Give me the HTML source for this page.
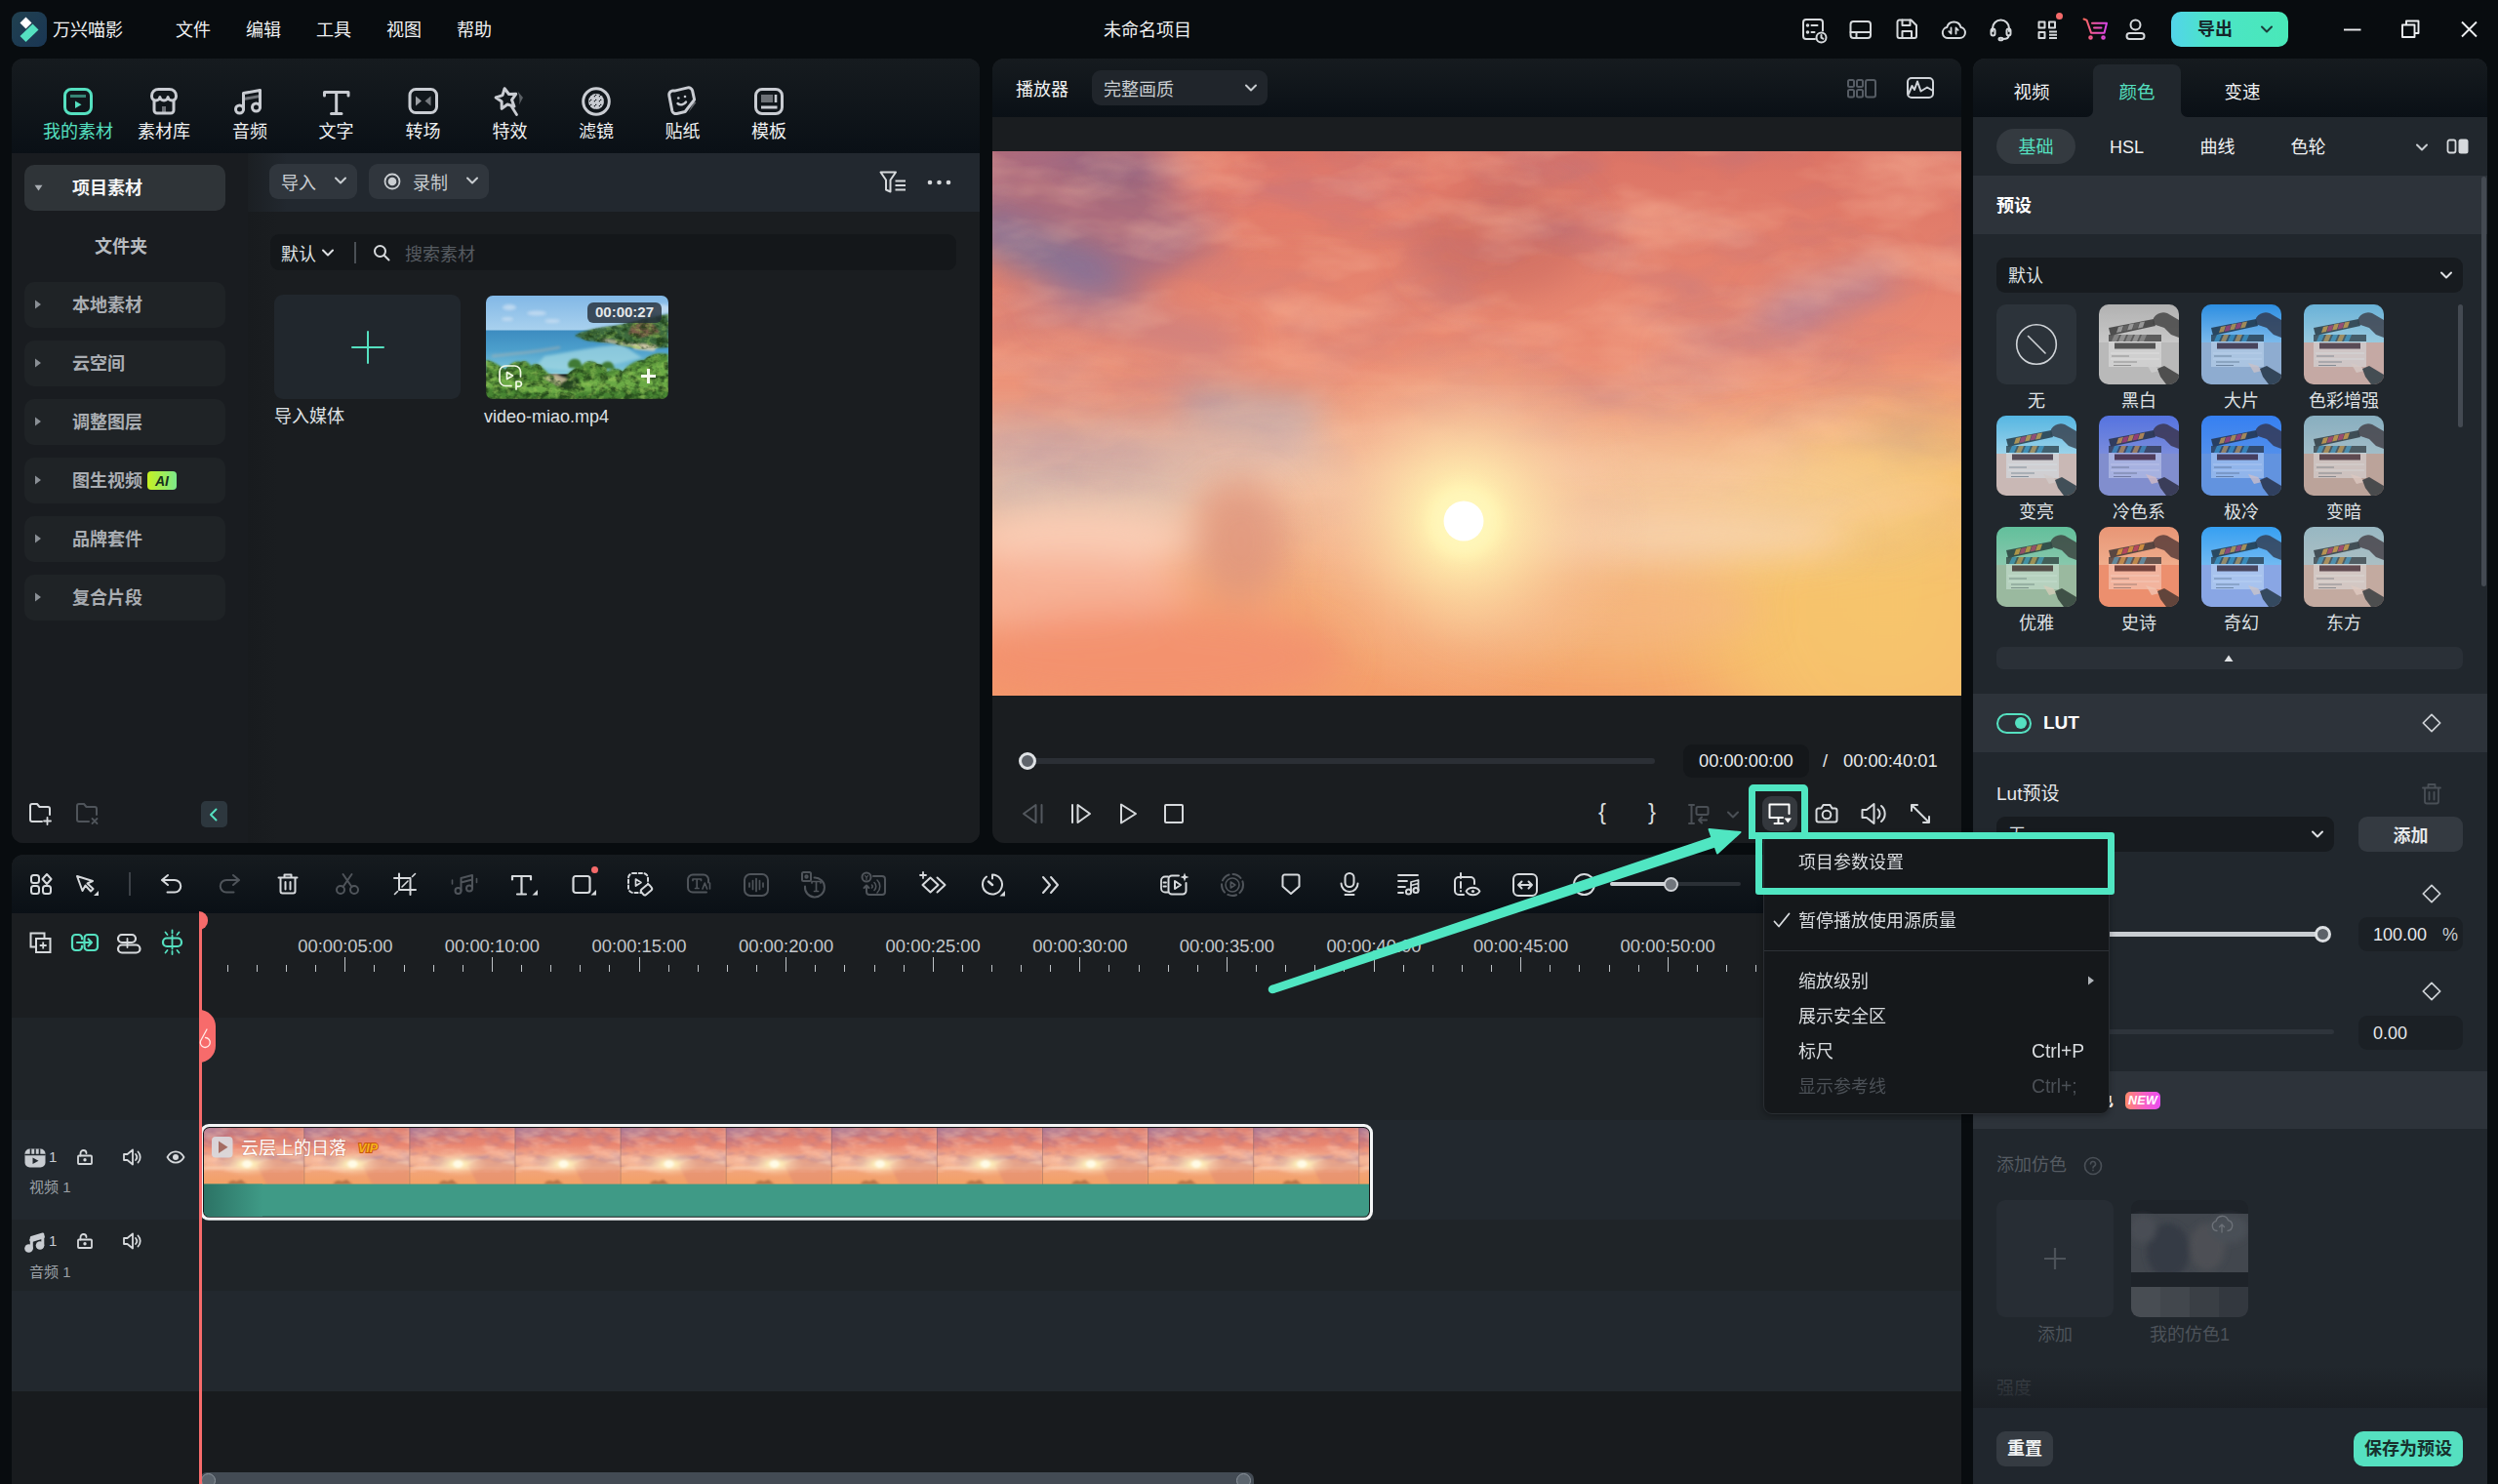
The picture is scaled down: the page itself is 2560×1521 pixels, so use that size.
<!DOCTYPE html>
<html lang="zh-CN">
<head>
<meta charset="utf-8">
<title>万兴喵影</title>
<style>
*{box-sizing:border-box;margin:0;padding:0}
html,body{width:2560px;height:1521px;overflow:hidden;background:#080c0f}
body{position:relative;font-family:"Liberation Sans","Noto Sans CJK SC",sans-serif;font-size:18px;color:#e6e8ea;line-height:1}
.a{position:absolute}
.t{position:absolute;white-space:nowrap;line-height:24px;height:24px}
.c{text-align:center}
.b{font-weight:bold}
svg{position:absolute;overflow:visible}
.ic{fill:none;stroke:#d6d9dc;stroke-width:2;stroke-linecap:round;stroke-linejoin:round}
.dim{stroke:#4f545a}
.teal{stroke:#55e0c0}
/* ---------- panels ---------- */
#left{left:12px;top:60px;width:992px;height:804px;border-radius:12px;background:#1a1d20;overflow:hidden}
#player{left:1017px;top:60px;width:993px;height:804px;border-radius:12px;background:#1a1d20;overflow:hidden}
#right{left:2022px;top:60px;width:527px;height:1480px;border-radius:12px 12px 0 0;background:#21272d;overflow:hidden}
#tl{left:12px;top:876px;width:1998px;height:660px;border-radius:12px 12px 0 0;background:#1b1e21;overflow:hidden}
.hdr{left:0;top:0;width:100%;background:linear-gradient(#161b1f,#0a1016)}
</style>
</head>
<body>

<!-- ================= TITLE BAR ================= -->
<div id="titlebar" class="a" style="left:0;top:0;width:2560px;height:60px">

  <!-- logo -->
  <div class="a" style="left:12px;top:12px;width:36px;height:36px;border-radius:9px;background:linear-gradient(135deg,#20404f,#1a3654)"></div>
  <svg style="left:12px;top:12px" width="36" height="36" viewBox="0 0 36 36"><path d="M14.5 5.5 L20.5 11.5 L14.5 17.5 L8.5 11.5 Z" fill="#ffffff"/><path d="M21.5 12.5 L27.5 18.5 L14.5 31 L8.5 25 Z" fill="#55e0c0"/></svg>
  <div class="t" style="left:54px;top:18.500px;color:#f0f1f2">万兴喵影</div>
  <div class="t" style="left:180px;top:18.500px;color:#f0f1f2">文件</div>
  <div class="t" style="left:252px;top:18.500px;color:#f0f1f2">编辑</div>
  <div class="t" style="left:324px;top:18.500px;color:#f0f1f2">工具</div>
  <div class="t" style="left:396px;top:18.500px;color:#f0f1f2">视图</div>
  <div class="t" style="left:468px;top:18.500px;color:#f0f1f2">帮助</div>
  <div class="t c" style="left:1076px;width:200px;top:18.500px;color:#f0f1f2">未命名项目</div>
  <!-- title icons -->
  <svg class="ic" style="left:1847px;top:19px" width="26" height="26" viewBox="0 0 26 26"><path d="M13 21H4a3 3 0 0 1-3-3V4a3 3 0 0 1 3-3h14a3 3 0 0 1 3 3v8.5"/><path d="M9.5 7h6M9.5 14h3"/><circle cx="5.5" cy="7" r=".8" fill="#d6d9dc"/><circle cx="5.5" cy="14" r=".8" fill="#d6d9dc"/><circle cx="19.5" cy="19.5" r="5"/><path d="M19.5 17v2.7l1.8 1"/></svg>
  <svg class="ic" style="left:1895px;top:20px" width="24" height="22" viewBox="0 0 24 22"><rect x="1.5" y="2" width="20.5" height="17" rx="3"/><path d="M1.5 13h20.5M7.5 13v6"/></svg>
  <svg class="ic" style="left:1943px;top:19px" width="24" height="24" viewBox="0 0 24 24"><path d="M1.5 3.5a2 2 0 0 1 2-2h12l5.5 5.5v11a2 2 0 0 1-2 2h-15.5a2 2 0 0 1-2-2z"/><path d="M6.5 1.5v5.5h8v-5.5M6.5 20v-7h9.5v7"/></svg>
  <svg class="ic" style="left:1989px;top:19px" width="27" height="24" viewBox="0 0 27 24"><path d="M7.5 20a5.5 5.5 0 0 1-1.2-10.9 7.3 7.3 0 0 1 14.2 0A5.5 5.5 0 0 1 19.5 20z"/><path d="M10.5 9.5v6l-2.2-2.4M15.5 15.5v-6l2.2 2.4" stroke-width="1.8"/></svg>
  <svg class="ic" style="left:2039px;top:19px" width="24" height="24" viewBox="0 0 24 24"><path d="M3 13V10a8.500 8.500 0 0 1 17 0v3"/><rect x="1.500" y="10.500" width="4" height="7" rx="2"/><rect x="17.500" y="10.500" width="4" height="7" rx="2"/><path d="M19.500 17.500c0 2.500-2.500 3.500-6 3.500"/><ellipse cx="11.500" cy="21" rx="2" ry="1.300"/></svg>
  <svg class="ic" style="left:2088px;top:21px" width="22" height="20" viewBox="0 0 22 20"><rect x="1.500" y="1.500" width="6" height="6"/><rect x="12" y="1.500" width="6" height="6"/><rect x="1.500" y="12" width="6" height="6"/><path d="M12 11.500h8M12 14.800h8M12 18h8" stroke-linecap="butt"/></svg>
  <div class="a" style="left:2107px;top:13px;width:7px;height:7px;border-radius:4px;background:#f46a6a"></div>
  <svg style="left:2134px;top:18px;fill:none;stroke:url(#cartg);stroke-width:2;stroke-linecap:round;stroke-linejoin:round" width="28" height="24" viewBox="0 0 28 24"><defs><linearGradient id="cartg" gradientUnits="userSpaceOnUse" x1="0" y1="0" x2="28" y2="0"><stop offset="0" stop-color="#f4674d"/><stop offset=".5" stop-color="#f255b2"/><stop offset="1" stop-color="#d03ff0"/></linearGradient></defs><path d="M1.500 1.500l3 1.200 4.500 13h13.500l2.500-10h-15"/><path d="M12 10.500h7.500"/><circle cx="8.500" cy="20.500" r="1.300"/><circle cx="21.500" cy="20.500" r="1.300"/></svg>
  <svg class="ic" style="left:2178px;top:19px" width="22" height="24" viewBox="0 0 22 24"><circle cx="10.500" cy="6.500" r="5"/><rect x="1.500" y="15" width="18" height="6" rx="3"/></svg>
  <!-- export -->
  <div class="a" style="left:2225px;top:12px;width:120px;height:36px;border-radius:10px;background:linear-gradient(90deg,#52d4ea,#4ce4c8 32%,#49e8b8)"></div>
  <div class="t b" style="left:2252px;top:18px;color:#15252a">导出</div>
  <svg style="left:2316px;top:25px;fill:none;stroke:#1c3c3a;stroke-width:2;stroke-linecap:round;stroke-linejoin:round" width="14" height="10" viewBox="0 0 14 10"><path d="M2 2.500l5 5 5-5"/></svg>
  <!-- window controls -->
  <svg class="ic" style="left:2398px;top:18px;stroke:#eceef0;stroke-width:1.900;stroke-linecap:butt" width="150" height="26" viewBox="0 0 150 26"><path d="M4 12.500h17.500"/><path d="M64 7.500h12.500v12.500h-12.500z"/><path d="M68 7.500v-4h12.500v12.500h-4"/><path d="M125 4.500l15 15M140 4.500l-15 15"/></svg>
</div>

<!-- ================= LEFT PANEL ================= -->
<div id="left" class="a"><div class="a pg" style="left:-12px;top:-60px;width:2560px;height:1521px">
  <div class="a" style="left:12px;top:60px;width:992px;height:97px;background:linear-gradient(#161b1f,#0a1016)"></div>
<div class="t c" style="left:20px;width:120px;top:123px;color:#55e0c0">我的素材</div>
<div class="t c" style="left:108px;width:120px;top:123px;color:#f0f1f2">素材库</div>
<div class="t c" style="left:196px;width:120px;top:123px;color:#f0f1f2">音频</div>
<div class="t c" style="left:284.5px;width:120px;top:123px;color:#f0f1f2">文字</div>
<div class="t c" style="left:373.5px;width:120px;top:123px;color:#f0f1f2">转场</div>
<div class="t c" style="left:462.5px;width:120px;top:123px;color:#f0f1f2">特效</div>
<div class="t c" style="left:551px;width:120px;top:123px;color:#f0f1f2">滤镜</div>
<div class="t c" style="left:639.5px;width:120px;top:123px;color:#f0f1f2">贴纸</div>
<div class="t c" style="left:728px;width:120px;top:123px;color:#f0f1f2">模板</div>
<svg style="left:64px;top:89px;fill:none;stroke:#55e0c0;stroke-width:3;stroke-linejoin:round" width="32" height="30" viewBox="0 0 32 30"><rect x="2.500" y="2.500" width="27" height="25" rx="6.500"/><path d="M8 9.500h16" stroke-opacity=".55" stroke-width="3.200"/><path d="M13 14.500l6.500 3.700-6.500 3.700z" fill="#55e0c0" stroke="none"/></svg>
<svg style="left:153px;top:89px;fill:none;stroke:#c9ccd2;stroke-width:3;stroke-linejoin:round;stroke-linecap:round" width="30" height="30" viewBox="0 0 30 30"><path d="M5 14v10a3 3 0 0 0 3 3h14a3 3 0 0 0 3-3V14"/><path d="M2.500 9.500c0-4.500 3-7 7-7h11c4 0 7 2.500 7 7 0 2.500-1.800 4.500-4.200 4.500s-4.200-1.700-4.200-3.500c0 1.800-1.800 3.500-4.100 3.500s-4.100-1.700-4.100-3.500c0 1.800-1.800 3.500-4.200 3.500S2.500 12 2.500 9.500z"/><path d="M15 20v6" stroke-opacity=".5" stroke-width="4" stroke-linecap="butt"/></svg>
<svg style="left:240px;top:90px;fill:none;stroke:#c9ccd2;stroke-width:3;stroke-linejoin:round;stroke-linecap:round" width="30" height="30" viewBox="0 0 30 30"><circle cx="5.500" cy="22" r="4"/><circle cx="22.500" cy="20" r="4"/><path d="M9.500 22V5.500l17-3V20"/><path d="M9.500 11.500l17-3" stroke-opacity=".5" stroke-linecap="butt"/></svg>
<svg style="left:330px;top:92px;fill:none;stroke:#c9ccd2;stroke-width:3;stroke-linejoin:round;stroke-linecap:round" width="30" height="27" viewBox="0 0 30 27"><path d="M2.500 6V2.500h24.500V6M14.700 2.500v22M9.500 24.500h10.500"/></svg>
<svg style="left:418px;top:89px;fill:none;stroke:#c9ccd2;stroke-width:3;stroke-linejoin:round" width="32" height="30" viewBox="0 0 32 30"><rect x="2" y="2.500" width="27.500" height="24" rx="6"/><path d="M8 9.500l6 5-6 5z" fill="#c9ccd2" fill-opacity=".75" stroke="none"/><path d="M23.500 9.500l-6 5 6 5z" fill="#c9ccd2" fill-opacity=".55" stroke="none"/></svg>
<svg style="left:506px;top:88px;fill:none;stroke:#c9ccd2;stroke-width:3;stroke-linejoin:round;stroke-linecap:round" width="34" height="32" viewBox="0 0 34 32"><path d="M11.1 2.7L15.5 8.5L22.7 8.3L18.5 14.3L20.9 21.1L14.0 19.0L8.2 23.4L8.1 16.1L2.1 12.0L9.0 9.6z"/><path d="M18.500 21.500l5 8" stroke-width="2.800"/><path d="M24.500 5.500l5.500 6.500-4 7.500c1-4 .5-9-1.500-14z" fill="#c9ccd2" fill-opacity=".4" stroke="none"/></svg>
<svg style="left:595px;top:88px;fill:none;stroke:#c9ccd2;stroke-width:3" width="32" height="32" viewBox="0 0 32 32"><defs><pattern id="chk" width="5" height="5" patternUnits="userSpaceOnUse"><rect x=".3" y=".3" width="2" height="2" fill="#c9ccd2" fill-opacity=".55"/><rect x="2.800" y="2.800" width="2" height="2" fill="#c9ccd2" fill-opacity=".55"/></pattern></defs><circle cx="16" cy="16" r="8" fill="url(#chk)" stroke="none"/><circle cx="16" cy="16" r="13.300"/></svg>
<svg style="left:683px;top:88px;fill:none;stroke:#c9ccd2;stroke-width:3;stroke-linejoin:round;stroke-linecap:round" width="34" height="32" viewBox="0 0 34 32"><path d="M8.300 5.600l13.500-3.200a4 4 0 0 1 4.800 3l2 9.200-9.500 12.400-8.500 2a4 4 0 0 1-4.800-3L2.800 10.400a4 4 0 0 1 3-4.800z" transform="translate(0,-.5)"/><path d="M28 16l2.500 1-8 10.500z" fill="#c9ccd2" fill-opacity=".45" stroke="none"/><circle cx="12.300" cy="12.500" r="1.300" fill="#c9ccd2" stroke="none"/><circle cx="19" cy="11" r="1.300" fill="#c9ccd2" stroke="none"/><path d="M11.500 18c2.500 2.300 6.500 1.500 8.500-1.500" stroke-width="2.400"/></svg>
<svg style="left:772px;top:89px;fill:none;stroke:#c9ccd2;stroke-width:3;stroke-linejoin:round" width="32" height="30" viewBox="0 0 32 30"><rect x="2.500" y="2.500" width="27" height="25" rx="6.500"/><rect x="8" y="8" width="12" height="8" fill="#c9ccd2" fill-opacity=".5" stroke="none"/><path d="M23 8v8" stroke-width="2.600"/><path d="M8 21h16.500" stroke-width="2.800"/></svg>
<div class="a" style="left:12px;top:157px;width:242px;height:707px;background:#191c20"></div>
<div class="a" style="left:254px;top:157px;width:750px;height:60px;background:linear-gradient(90deg,#1b1f23,#22282f 40px,#22282f)"></div>
<div class="a" style="left:254px;top:217px;width:750px;height:647px;background:linear-gradient(90deg,#181b1e,#1a1d20 30px,#1a1d20)"></div>
<div class="a" style="left:25px;top:169px;width:206px;height:47px;border-radius:10px;background:#2f3438"></div>
<svg style="left:35px;top:189px" width="9" height="7" viewBox="0 0 9 7"><path d="M.5 .8h8L4.500 6.500z" fill="#a9adb2"/></svg>
<div class="t b" style="left:74px;top:181px;color:#f4f5f6">项目素材</div>
<div class="t b" style="left:97px;top:240.500px;color:#b6babf">文件夹</div>
<div class="a" style="left:25px;top:289px;width:206px;height:47px;border-radius:10px;background:#1f2326"></div>
<svg style="left:35px;top:307px" width="8" height="10" viewBox="0 0 8 10"><path d="M1 .5v9L7 5z" fill="#8a8f95"/></svg>
<div class="t b" style="left:74px;top:301px;color:#a9adb2">本地素材</div>
<div class="a" style="left:25px;top:349px;width:206px;height:47px;border-radius:10px;background:#1f2326"></div>
<svg style="left:35px;top:367px" width="8" height="10" viewBox="0 0 8 10"><path d="M1 .5v9L7 5z" fill="#8a8f95"/></svg>
<div class="t b" style="left:74px;top:361px;color:#a9adb2">云空间</div>
<div class="a" style="left:25px;top:409px;width:206px;height:47px;border-radius:10px;background:#1f2326"></div>
<svg style="left:35px;top:427px" width="8" height="10" viewBox="0 0 8 10"><path d="M1 .5v9L7 5z" fill="#8a8f95"/></svg>
<div class="t b" style="left:74px;top:421px;color:#a9adb2">调整图层</div>
<div class="a" style="left:25px;top:469px;width:206px;height:47px;border-radius:10px;background:#1f2326"></div>
<svg style="left:35px;top:487px" width="8" height="10" viewBox="0 0 8 10"><path d="M1 .5v9L7 5z" fill="#8a8f95"/></svg>
<div class="t b" style="left:74px;top:481px;color:#a9adb2">图生视频</div>
<div class="a" style="left:25px;top:529px;width:206px;height:47px;border-radius:10px;background:#1f2326"></div>
<svg style="left:35px;top:547px" width="8" height="10" viewBox="0 0 8 10"><path d="M1 .5v9L7 5z" fill="#8a8f95"/></svg>
<div class="t b" style="left:74px;top:541px;color:#a9adb2">品牌套件</div>
<div class="a" style="left:25px;top:589px;width:206px;height:47px;border-radius:10px;background:#1f2326"></div>
<svg style="left:35px;top:607px" width="8" height="10" viewBox="0 0 8 10"><path d="M1 .5v9L7 5z" fill="#8a8f95"/></svg>
<div class="t b" style="left:74px;top:601px;color:#a9adb2">复合片段</div>
<div class="a" style="left:151px;top:483px;width:30px;height:19px;border-radius:4px;background:linear-gradient(90deg,#c6f222,#7ce98a)"></div>
<div class="t b c" style="left:151px;width:30px;top:481px;font-size:14px;font-style:italic;color:#16301c;font-family:'Liberation Sans',sans-serif">AI</div>
<svg class="ic" style="left:29px;top:822px" width="26" height="24" viewBox="0 0 26 24"><path d="M14 20H4a2 2 0 0 1-2-2V4a2 2 0 0 1 2-2h5l2.500 3H20a2 2 0 0 1 2 2v6"/><path d="M19.500 16v7M16 19.500h7" stroke-width="1.800"/></svg>
<svg class="ic dim" style="left:77px;top:822px" width="26" height="24" viewBox="0 0 26 24"><path d="M14 20H4a2 2 0 0 1-2-2V4a2 2 0 0 1 2-2h5l2.500 3H20a2 2 0 0 1 2 2v6"/><path d="M17.500 17l5 5M22.500 17l-5 5" stroke-width="1.800"/></svg>
<div class="a" style="left:206px;top:821px;width:27px;height:27px;border-radius:5px;background:#2d373e"></div>
<svg class="ic teal" style="left:212px;top:827px" width="14" height="16" viewBox="0 0 14 16"><path d="M9.500 2.500L4 8l5.500 5.500"/></svg>
<div class="a" style="left:276px;top:168px;width:90px;height:36px;border-radius:9px;background:#30363d"></div>
<div class="t" style="left:288px;top:175.500px;color:#c9cdd1">导入</div>
<svg class="ic" style="left:342px;top:180px;stroke:#c9cdd1" width="14" height="10" viewBox="0 0 14 10"><path d="M2 2.500l5 5 5-5"/></svg>
<div class="a" style="left:378px;top:168px;width:123px;height:36px;border-radius:9px;background:#30363d"></div>
<svg style="left:393px;top:177px" width="18" height="18" viewBox="0 0 18 18"><circle cx="9" cy="9" r="7.500" fill="none" stroke="#c9cdd1" stroke-width="1.800"/><circle cx="9" cy="9" r="4.300" fill="#c9cdd1"/></svg>
<div class="t" style="left:423px;top:175.500px;color:#c9cdd1">录制</div>
<svg class="ic" style="left:477px;top:180px;stroke:#c9cdd1" width="14" height="10" viewBox="0 0 14 10"><path d="M2 2.500l5 5 5-5"/></svg>
<svg class="ic" style="left:900px;top:174px" width="30" height="24" viewBox="0 0 30 24"><path d="M2.500 2.500h15.500l-5.500 8v12l-4.500-2v-10z"/><path d="M17.500 11.500h10.500M17.500 16h10.500M17.500 20.500h10.500" stroke-width="1.900" stroke-linecap="butt"/></svg>
<svg style="left:950px;top:183px" width="26" height="8" viewBox="0 0 26 8"><circle cx="3" cy="4" r="2.300" fill="#d6d9dc"/><circle cx="12.500" cy="4" r="2.300" fill="#d6d9dc"/><circle cx="22" cy="4" r="2.300" fill="#d6d9dc"/></svg>
<div class="a" style="left:277px;top:240px;width:703px;height:37px;border-radius:9px;background:#14171a"></div>
<div class="t" style="left:288px;top:248.500px;color:#dfe1e4">默认</div>
<svg class="ic" style="left:329px;top:254px;stroke:#dfe1e4" width="14" height="10" viewBox="0 0 14 10"><path d="M2 2.500l5 5 5-5"/></svg>
<div class="a" style="left:363px;top:248px;width:2px;height:22px;background:#4a4f55"></div>
<svg class="ic" style="left:382px;top:250px" width="18" height="18" viewBox="0 0 18 18"><circle cx="7.500" cy="7.500" r="5.500"/><path d="M12 12l4.500 4.500"/></svg>
<div class="t" style="left:415px;top:248.500px;color:#565b61">搜索素材</div>
<div class="a" style="left:281px;top:302px;width:191px;height:107px;border-radius:9px;background:#21272d"></div>
<svg style="left:359px;top:338px;stroke:#55e0c0;stroke-width:2;stroke-linecap:round" width="36" height="36" viewBox="0 0 36 36"><path d="M18 2v32M2 18h32"/></svg>
<div class="t" style="left:281px;top:415px;color:#dfe1e4">导入媒体</div>
<div class="t" style="left:496px;top:415px;color:#dfe1e4">video-miao.mp4</div>
<svg style="left:498px;top:303px;border-radius:7px;overflow:hidden" width="187" height="106" viewBox="0 0 187 106">
<defs>
<linearGradient id="bsky" x1="0" y1="0" x2="0" y2="1"><stop offset="0" stop-color="#82b8e6"/><stop offset="1" stop-color="#a9d1ee"/></linearGradient>
<linearGradient id="bsea" x1="0" y1="0" x2="0" y2="1"><stop offset="0" stop-color="#3d8cc0"/><stop offset=".45" stop-color="#4c9fcc"/><stop offset="1" stop-color="#86cbdc"/></linearGradient>
<filter id="bb2" x="-20%" y="-20%" width="140%" height="140%"><feGaussianBlur stdDeviation="1.600"/></filter>
<filter id="bb1" x="-20%" y="-20%" width="140%" height="140%"><feGaussianBlur stdDeviation=".8"/></filter><filter id="bturb" x="0" y="0" width="100%" height="100%" color-interpolation-filters="sRGB"><feTurbulence type="fractalNoise" baseFrequency="0.12 0.16" numOctaves="3" seed="3" result="n"/><feColorMatrix in="n" type="matrix" values="0 0 0 0 0.10  0 0 0 0 0.22  0 0 0 0 0.08  3.200 0 0 0 -1.350"/></filter><filter id="bturb2" x="0" y="0" width="100%" height="100%" color-interpolation-filters="sRGB"><feTurbulence type="fractalNoise" baseFrequency="0.14 0.18" numOctaves="3" seed="9" result="n"/><feColorMatrix in="n" type="matrix" values="0 0 0 0 0.62  0 0 0 0 0.80  0 0 0 0 0.36  0 3.200 0 0 -1.500"/></filter><clipPath id="btree"><path d="M0 66c8 1 14 6 20 10 4-6 10-10 16-8 4-2 8 0 10 4 4-3 10-2 12 2l6 6c6 2 12 6 14 10 4-8 10-16 20-18 4-6 12-6 16-2 6 0 10 4 10 8 6-4 12-4 16 0 6-8 14-12 22-12 6-6 14-8 25-6v46H0zM91 41c8-5 22-8 40-10 14-2 30-8 56-12v34l-30 2-28-6-26-3z"/></clipPath>
</defs>
<rect width="187" height="36" fill="url(#bsky)"/>
<g filter="url(#bb2)" fill="#c8def2" opacity=".8"><ellipse cx="24" cy="12" rx="7" ry="3"/><ellipse cx="52" cy="18" rx="10" ry="2.500"/><ellipse cx="68" cy="26" rx="8" ry="2"/><ellipse cx="22" cy="24" rx="6" ry="2"/><ellipse cx="180" cy="14" rx="10" ry="5"/></g>
<rect y="35.500" width="187" height="45" fill="url(#bsea)"/>
<g filter="url(#bb2)">
<path d="M60 62c20-3 50-10 80-12l20 14-60 14-50-4z" fill="#9fd6e2" opacity=".75"/>
<path d="M6 62c30-3 50-5 70-9" stroke="#c9b6a4" stroke-width="2" fill="none" opacity=".55"/>
</g>
<g filter="url(#bb1)">
<path d="M91 41c8-5 22-8 40-10 14-2 30-8 56-12v34l-30 2-28-6-26-3z" fill="#3c6a3c"/>
<path d="M150 30l14-3 8 3 6 8-20 5-12-4z" fill="#8a5a4c" opacity=".8"/>
<path d="M120 44c14 2 30 6 44 6l-2 3c-16-1-30-4-44-6z" fill="#d8c8b8" opacity=".7"/>
<path d="M150 50c10-1 20 0 26 2l-4 5-20-2z" fill="#e6d8b8" opacity=".8"/>
</g>
<g filter="url(#bb1)">
<path d="M0 66c8 1 14 6 20 10 4-6 10-10 16-8 4-2 8 0 10 4 4-3 10-2 12 2l6 6c6 2 12 6 14 10 4-8 10-16 20-18 4-6 12-6 16-2 6 0 10 4 10 8 6-4 12-4 16 0 6-8 14-12 22-12 6-6 14-8 25-6v46H0z" fill="#4f8a34"/>
<path d="M0 78c10 2 18 8 30 10 14 2 24-4 34 2 10 4 22 2 34-4 14-4 26-2 40-8 18-4 34-6 49-12v40H0z" fill="#6aa944"/>
<path d="M70 92c4-8 12-12 20-10 6 2 8 8 4 12-6 4-18 4-24-2z" fill="#1f3a20" opacity=".85"/>
<path d="M84 70c2-6 10-7 13-2l2 6h-14zM118 72c2-5 9-6 12-2l2 5h-13z" fill="#3f7a34"/>
<path d="M58 84l14-4 12 6-10 6z" fill="#d8c8a8" opacity=".8"/>
<path d="M0 96c20-4 40 2 60 4 30 2 60-6 127-2v8H0z" fill="#3f7a30" opacity=".8"/>
</g>
<g clip-path="url(#btree)"><rect width="187" height="106" filter="url(#bturb)" opacity=".75"/><rect width="187" height="106" filter="url(#bturb2)" opacity=".5"/></g>
</svg>
<div class="a" style="left:602px;top:310px;width:76px;height:21px;border-radius:6px;background:rgba(38,48,58,.82)"></div>
<div class="t b c" style="left:602px;width:76px;top:308px;font-size:15px;color:#e4e8ea;font-family:'Liberation Sans',sans-serif">00:00:27</div>
<svg class="ic" style="left:510px;top:373px;stroke:#f4fbe8;stroke-width:1.700" width="28" height="28" viewBox="0 0 28 28"><path d="M14 22.500h-6a6 6 0 0 1-6-6v-8.500a6 6 0 0 1 6-6h9.500a6 6 0 0 1 6 6v5"/><path d="M9.500 8.500l6 3.500-6 3.500z"/><path d="M19 26v-8h2.800a2.600 2.600 0 0 1 0 5.200h-2.800"/></svg>
<svg class="ic" style="left:656px;top:377px;stroke:#f4f8ee;stroke-width:3;stroke-linecap:butt" width="17" height="17" viewBox="0 0 17 17"><path d="M8.500 1v15M1 8.500h15"/></svg>
</div></div>

<!-- ================= PLAYER ================= -->
<div id="player" class="a"><div class="a pg" style="left:-1017px;top:-60px;width:2560px;height:1521px">
  <div class="a" style="left:1017px;top:60px;width:993px;height:60px;background:linear-gradient(#161b1f,#0a1016)"></div>
<div class="t" style="left:1041px;top:80px;color:#f0f1f2">播放器</div>
<div class="a" style="left:1119px;top:72px;width:180px;height:36px;border-radius:9px;background:#20252b"></div>
<div class="t" style="left:1131px;top:80px;color:#c9cdd1">完整画质</div>
<svg class="ic" style="left:1275px;top:85px;stroke:#c9cdd1" width="14" height="10" viewBox="0 0 14 10"><path d="M2 2.500l5 5 5-5"/></svg>
<svg class="ic" style="left:1892px;top:80px;stroke:#565c64" width="32" height="22" viewBox="0 0 32 22"><rect x="2" y="2" width="6" height="7" rx="1.500"/><rect x="11" y="2" width="6" height="7" rx="1.500"/><rect x="2" y="12" width="6" height="7.500" rx="1.500"/><rect x="11" y="12" width="6" height="7.500" rx="1.500"/><rect x="20" y="2" width="10" height="17.500" rx="2"/></svg>
<svg class="ic" style="left:1953px;top:78px;stroke:#cfd3d8" width="30" height="24" viewBox="0 0 30 24"><rect x="2" y="2" width="26" height="20" rx="4"/><path d="M3 18l3.500-8 2.500 4 3-8.500 3.500 10 6.500-4 5 3"/></svg>
<svg style="left:1017px;top:155px" width="993" height="558" viewBox="0 0 993 558">
<defs>
<linearGradient id="vbg" x1="0" y1="0" x2="0" y2="1"><stop offset="0" stop-color="#dc7466"/><stop offset=".35" stop-color="#ea8a72"/><stop offset=".6" stop-color="#f2a888"/><stop offset=".78" stop-color="#f4a67a"/><stop offset="1" stop-color="#f49a6a"/></linearGradient>
<radialGradient id="vsun" cx="0.5" cy="0.5" r="0.5"><stop offset="0" stop-color="#fffbd8" stop-opacity="1"/><stop offset=".18" stop-color="#fff2b0" stop-opacity=".95"/><stop offset=".4" stop-color="#fde0a8" stop-opacity=".7"/><stop offset=".7" stop-color="#f9c9a0" stop-opacity=".3"/><stop offset="1" stop-color="#f8c090" stop-opacity="0"/></radialGradient>
<linearGradient id="vyel" x1="0" y1="0" x2="1" y2="0"><stop offset="0" stop-color="#f6c56e" stop-opacity="0"/><stop offset=".45" stop-color="#f6c56e" stop-opacity=".15"/><stop offset="1" stop-color="#f7c76c" stop-opacity="1"/></linearGradient>
<filter id="vb40" x="-50%" y="-50%" width="200%" height="200%"><feGaussianBlur stdDeviation="40"/></filter>
<filter id="vb20" x="-50%" y="-50%" width="200%" height="200%"><feGaussianBlur stdDeviation="18"/></filter>
<filter id="vb8" x="-50%" y="-50%" width="200%" height="200%"><feGaussianBlur stdDeviation="8"/></filter>
<filter id="vturb" x="0" y="0" width="100%" height="100%" color-interpolation-filters="sRGB"><feTurbulence type="fractalNoise" baseFrequency="0.006 0.014" numOctaves="4" seed="7" result="n"/><feColorMatrix in="n" type="matrix" values="0 0 0 0 0.55  0 0 0 0 0.42  0 0 0 0 0.62  2.600 0 0 0 -1.150"/></filter>
<filter id="vturb2" x="0" y="0" width="100%" height="100%" color-interpolation-filters="sRGB"><feTurbulence type="fractalNoise" baseFrequency="0.008 0.02" numOctaves="4" seed="23" result="n"/><feColorMatrix in="n" type="matrix" values="0 0 0 0 1  0 0 0 0 0.78  0 0 0 0 0.66  0 2.400 0 0 -1.050"/></filter>
<linearGradient id="vfade" x1="0" y1="0" x2="0" y2="1"><stop offset="0" stop-color="#fff" stop-opacity="1"/><stop offset=".55" stop-color="#fff" stop-opacity=".7"/><stop offset=".8" stop-color="#fff" stop-opacity="0"/></linearGradient>
<mask id="vmask"><rect width="993" height="558" fill="url(#vfade)"/></mask>
<clipPath id="vclip"><rect width="993" height="558"/></clipPath>
</defs>
<g clip-path="url(#vclip)">
<rect width="993" height="558" fill="url(#vbg)"/>
<!-- yellow lower right -->
<rect x="0" y="300" width="993" height="258" fill="url(#vyel)" filter="url(#vb40)"/>
<ellipse cx="960" cy="470" rx="220" ry="200" fill="#f7c56c" filter="url(#vb40)" opacity=".8"/>
<!-- blue/purple upper-left streaks -->
<g filter="url(#vb20)">
<path d="M-30 -20 L170 -20 L230 90 L130 160 L-30 95 Z" fill="#9a6884" opacity=".72"/><path d="M-20 55 L110 105 L140 135 L100 150 L-20 100 Z" fill="#74749c" opacity=".8"/>
<path d="M60 -10 L160 10 L190 55 L90 30 Z" fill="#86607e" opacity=".6"/>
<path d="M60 140 L260 190 L240 215 L50 170 Z" fill="#b07890" opacity=".6"/>
<path d="M-20 270 L330 285 L360 335 L-20 350 Z" fill="#c4b8bc" opacity=".55"/>
<path d="M200 240 L340 258 L335 285 L190 270 Z" fill="#93a8c4" opacity=".65"/>
<path d="M-20 335 L220 345 L190 390 L-20 390 Z" fill="#cfcac2" opacity=".6"/>
<path d="M790 150 L920 110 L930 140 L800 185 Z" fill="#a880a0" opacity=".7"/>
<path d="M690 200 L840 170 L850 200 L700 225 Z" fill="#c88890" opacity=".5"/>
<ellipse cx="520" cy="90" rx="90" ry="60" fill="#cf6e62" opacity=".7"/>
<ellipse cx="330" cy="40" rx="160" ry="30" fill="#e97f6c" opacity=".6"/>
</g>
<g mask="url(#vmask)"><rect width="993" height="558" filter="url(#vturb)" opacity=".24"/><rect width="993" height="558" filter="url(#vturb2)" opacity=".38"/></g>
<!-- horizon pale band -->
<ellipse cx="560" cy="350" rx="420" ry="55" fill="#f7d8bc" opacity=".55" filter="url(#vb40)"/>
<!-- clouds low -->
<g filter="url(#vb20)">
<ellipse cx="90" cy="395" rx="120" ry="32" fill="#fad0b8" opacity=".95"/>
<ellipse cx="70" cy="450" rx="130" ry="40" fill="#f7b49c" opacity=".8"/>
<ellipse cx="255" cy="400" rx="48" ry="62" fill="#dc917c" opacity=".7"/>
<ellipse cx="160" cy="520" rx="200" ry="50" fill="#f38e6e" opacity=".8"/>
<ellipse cx="700" cy="395" rx="180" ry="22" fill="#fad9b8" opacity=".7"/>
<ellipse cx="620" cy="470" rx="170" ry="40" fill="#f5b886" opacity=".6"/>
</g>
<!-- sun -->
<circle cx="483" cy="379" r="190" fill="url(#vsun)"/>
<circle cx="483" cy="379" r="34" fill="#fff6b8" filter="url(#vb8)"/>
<circle cx="483" cy="379" r="20.500" fill="#ffffff"/>
</g>
</svg>
<div class="a" style="left:1052px;top:777px;width:644px;height:6px;border-radius:3px;background:#2b2f35"></div>
<div class="a" style="left:1044px;top:771px;width:18px;height:18px;border-radius:9px;background:#5e636a;border:3.200px solid #dfe2e5"></div>
<div class="a" style="left:1725px;top:763px;width:129px;height:34px;border-radius:9px;background:#14171a"></div>
<div class="t" style="left:1741px;top:768px;color:#e8eaec;font-size:18.300px">00:00:00:00</div>
<div class="t" style="left:1868px;top:768px;color:#e8eaec">/</div>
<div class="t" style="left:1889px;top:768px;color:#e8eaec;font-size:18.300px">00:00:40:01</div>
<svg class="ic" style="left:1046px;top:822px;stroke:#53585e" width="26" height="24" viewBox="0 0 26 24"><path d="M15.500 3v18l-12.500-9z"/><path d="M21.500 3v18"/></svg>
<svg class="ic" style="left:1096px;top:822px" width="26" height="24" viewBox="0 0 26 24"><path d="M3 3v18"/><path d="M8.500 3v18l12.500-9z"/></svg>
<svg class="ic" style="left:1145px;top:822px" width="24" height="24" viewBox="0 0 24 24"><path d="M4 2.500v19l15-9.500z"/></svg>
<svg class="ic" style="left:1192px;top:823px" width="22" height="22" viewBox="0 0 22 22"><rect x="2" y="2" width="18" height="18" rx="1"/></svg>
<div class="t" style="left:1638px;top:820px;font-size:24px;color:#d6d9dc;font-family:'Liberation Sans',sans-serif">{</div>
<div class="t" style="left:1689px;top:820px;font-size:24px;color:#d6d9dc;font-family:'Liberation Sans',sans-serif">}</div>
<svg class="ic" style="left:1729px;top:823px;stroke:#4a4f55" width="26" height="24" viewBox="0 0 26 24"><path d="M2 2h5M2 21h5M4.500 2v19"/><rect x="9.500" y="4" width="12" height="8" rx="1.500"/><path d="M20 17.500h-8m3-3l-3 3 3 3"/></svg>
<svg class="ic" style="left:1769px;top:830px;stroke:#4a4f55" width="14" height="10" viewBox="0 0 14 10"><path d="M2 2.500l5 5 5-5"/></svg>
<div class="a" style="left:1806px;top:816px;width:36px;height:36px;border-radius:9px;background:#34383d"></div>
<svg class="ic" style="left:1810px;top:821px;stroke:#ffffff" width="28" height="26" viewBox="0 0 28 26"><path d="M17 17H3.500V3.500h20V13"/><path d="M12.500 17v5.500M8.500 23h8.500"/><path d="M18.500 17.500h7.500l-3.750 5z" fill="#fff" stroke="none"/></svg>
<svg class="ic" style="left:1859px;top:822px" width="26" height="24" viewBox="0 0 26 24"><path d="M2.500 8.500a2 2 0 0 1 2-2h3l2-3.500h7l2 3.500h3a2 2 0 0 1 2 2v10a2 2 0 0 1-2 2h-17a2 2 0 0 1-2-2z"/><circle cx="13" cy="13" r="4.300"/></svg>
<svg class="ic" style="left:1906px;top:821px" width="30" height="26" viewBox="0 0 30 26"><path d="M2.500 9v8h4.500l7.500 6V3L7 9z"/><path d="M18.500 8.500a6 6 0 0 1 0 9M22 5a10.500 10.500 0 0 1 0 16"/></svg>
<svg class="ic" style="left:1956px;top:822px" width="24" height="24" viewBox="0 0 24 24"><path d="M3 3l18 18M3 9V3h6M21 15v6h-6"/></svg>
</div></div>

<!-- ================= TIMELINE ================= -->
<div id="tl" class="a"><div class="a pg" style="left:-12px;top:-876px;width:2560px;height:1521px">
  <div class="a" style="left:12px;top:876px;width:1998px;height:60px;background:linear-gradient(#161b1f,#0a1016)"></div>
<svg class="ic" style="left:30px;top:894px;" width="24" height="24" viewBox="0 0 24 24"><rect x="2" y="3" width="8" height="8" rx="2.500"/><rect x="2" y="14" width="8" height="8" rx="2.500"/><rect x="14" y="14" width="8" height="8" rx="2.500"/><path d="M18 2l4.500 5-4.500 5-4.500-5z"/></svg>
<svg class="ic" style="left:76px;top:895px;" width="28" height="24" viewBox="0 0 28 24"><path d="M3 3l5.500 15 3-5.500 5.500 6 2.500-2.500-6-5.500 5.500-2.500z"/><path d="M25 18v5h-5z" fill="#d6d9dc" stroke="none"/></svg>
<div class="a" style="left:132px;top:894px;width:2px;height:24px;background:#3c4147"></div>
<svg class="ic" style="left:163px;top:894px;" width="26" height="24" viewBox="0 0 26 24"><path d="M9 3l-6 5 6 5"/><path d="M3.500 8h12.500a6 6 0 0 1 0 12.500h-7.500"/></svg>
<svg class="ic dim" style="left:222px;top:894px;" width="26" height="24" viewBox="0 0 26 24"><path d="M17 3l6 5-6 5"/><path d="M22.500 8h-12.500a6 6 0 0 0 0 12.500h7.500"/></svg>
<svg class="ic" style="left:283px;top:894px;" width="24" height="24" viewBox="0 0 24 24"><path d="M2.500 5.500h19M8.500 5v-2.500h7v2.500M4.500 5.500v14a2 2 0 0 0 2 2h11a2 2 0 0 0 2-2v-14M9.500 10v7.500M14.500 10v7.500"/></svg>
<svg class="ic dim" style="left:343px;top:894px;" width="26" height="24" viewBox="0 0 26 24"><circle cx="6" cy="18" r="4"/><circle cx="20" cy="18" r="4"/><path d="M8.500 15l9-13M17.500 15l-9-13"/></svg>
<svg class="ic" style="left:403px;top:894px;" width="24" height="24" viewBox="0 0 24 24"><path d="M6 1.500v16.500h17M1 6h16.500v17"/><path d="M1.500 22.500l3-3M19.500 4.500l3-3M9 15l6-6" stroke-width="1.600"/></svg>
<svg class="ic dim" style="left:461px;top:894px;" width="30" height="24" viewBox="0 0 30 24"><circle cx="8.500" cy="19" r="3"/><circle cx="20" cy="16.500" r="3"/><path d="M11.500 19v-13l11.500-3v13.500M11.500 10.500l11.500-3"/><path d="M2.500 8v4M27.500 6.500v4" stroke-width="1.600"/></svg>
<svg class="ic" style="left:522px;top:895px;stroke-width:2.200" width="30" height="24" viewBox="0 0 30 24"><path d="M3 6.500v-3.500h19v3.500M12.500 3v18M8 21.500h9"/><path d="M29 17v5.500h-5.500z" fill="#d6d9dc" stroke="none"/></svg>
<svg class="ic" style="left:585px;top:895px;stroke-width:2.200" width="28" height="24" viewBox="0 0 28 24"><rect x="2.500" y="3" width="17" height="17" rx="2.500"/><path d="M26 17v5.500h-5.500z" fill="#d6d9dc" stroke="none"/></svg>
<div class="a" style="left:605.500px;top:887.500px;width:7px;height:7px;border-radius:4px;background:#f46a6a"></div>
<svg class="ic" style="left:642px;top:893px;" width="30" height="26" viewBox="0 0 30 26"><rect x="2" y="2" width="20" height="20" rx="5" stroke-dasharray="3.200 2.600"/><path d="M9.500 8l5.500 3.500-5.500 3.500z" stroke-width="1.700"/><rect x="15" y="15.500" width="11" height="7" rx="2" transform="rotate(-40 20.500 19)" fill="#12161b"/></svg>
<svg class="ic dim" style="left:702px;top:894px;" width="30" height="26" viewBox="0 0 30 26"><path d="M22 20.500h-14a5 5 0 0 1-5-5v-8a5 5 0 0 1 5-5h11a5 5 0 0 1 5 5v3"/><path d="M8 8.500v-1.500h8.500v1.500M12.200 7v9.500M10.500 16.500h3.500" stroke-width="1.700"/><path d="M18 17l2.300-6 2.300 6M25.500 11v6" stroke-width="1.600"/></svg>
<svg class="ic dim" style="left:761px;top:894px;" width="28" height="26" viewBox="0 0 28 26"><rect x="2" y="2" width="24" height="22" rx="6"/><path d="M7 11v4M10.500 8.500v9M14 6.500v13M17.500 8.500v9M21 11v4" stroke-width="1.700"/></svg>
<svg class="ic dim" style="left:820px;top:892px;" width="30" height="28" viewBox="0 0 30 28"><rect x="2" y="2" width="9" height="9" rx="1.500"/><circle cx="6.500" cy="6.500" r="1.200"/><path d="M14.500 7.500a10 10 0 1 1-9.500 9"/><path d="M12 13v-1.500h9v1.500M16.500 11.500v10M14.500 21.500h4" stroke-width="1.700"/></svg>
<svg class="ic dim" style="left:881px;top:892px;" width="30" height="28" viewBox="0 0 30 28"><circle cx="7" cy="7" r="4.500"/><path d="M5.500 5.500l1.500 2 1.500-2M7 7.500v2" stroke-width="1.200"/><path d="M14 6h9a3 3 0 0 1 3 3v13a3 3 0 0 1-3 3h-13a3 3 0 0 1-3-3v-6M4.500 18l2.500-2.500 2.500 2.500"/><path d="M12.500 15a2 2 0 0 1 0 3M15 12.500a5.500 5.500 0 0 1 0 8M18 10a9 9 0 0 1 0 13" stroke-width="1.600"/></svg>
<svg class="ic" style="left:940px;top:892px;" width="32" height="28" viewBox="0 0 32 28"><path d="M3 5h6M6 2v6" stroke-width="1.800"/><path d="M13.500 7.500l8 7.500-8 7.500-8-7.500z"/><path d="M20.500 7.500l8 7.500-8 7.500"/></svg>
<svg class="ic" style="left:1003px;top:893px;" width="28" height="28" viewBox="0 0 28 28"><path d="M8 5.500a10 10 0 1 0 6-2v4"/><path d="M10 10.500l4 3.500" stroke-width="2.400"/><path d="M27 20v5.500h-5.500z" fill="#d6d9dc" stroke="none"/></svg>
<svg class="ic" style="left:1066px;top:896px;" width="20" height="22" viewBox="0 0 20 22"><path d="M3 3l7 8-7 8M11 3l7 8-7 8"/></svg>
<svg class="ic" style="left:1188px;top:893px;" width="32" height="26" viewBox="0 0 32 26"><path d="M9 5.500h-3a4 4 0 0 0-4 4v8a4 4 0 0 0 4 4h3M4.500 11.500h2.500M4.500 15.500h2.500" stroke-width="1.800"/><path d="M20 4.500h-7a3.500 3.500 0 0 0-3.500 3.500v12a3.500 3.500 0 0 0 3.500 3.500h11a3.500 3.500 0 0 0 3.500-3.500v-8"/><path d="M16 10l6 4-6 4z"/><path d="M26 1.500l1.200 3.300 3.300 1.200-3.300 1.200-1.200 3.300-1.200-3.300-3.300-1.200 3.300-1.200z" fill="#d6d9dc" stroke="none"/></svg>
<svg class="ic dim" style="left:1250px;top:894px;" width="26" height="26" viewBox="0 0 26 26"><circle cx="13" cy="13" r="11" stroke-dasharray="9 4"/><circle cx="13" cy="13" r="7" stroke-width="1.600"/><path d="M11.300 10l4.500 3-4.500 3z" stroke-width="1.600"/></svg>
<svg class="ic" style="left:1312px;top:894px;" width="22" height="24" viewBox="0 0 22 24"><path d="M2.500 4.500a2 2 0 0 1 2-2h13a2 2 0 0 1 2 2v10l-8.500 7.500-8.500-7.500z"/></svg>
<svg class="ic" style="left:1372px;top:893px;" width="22" height="26" viewBox="0 0 22 26"><rect x="6.500" y="2" width="9" height="14" rx="4.500"/><path d="M2.500 12.500a8.500 8.500 0 0 0 17 0M6.500 24h9"/></svg>
<svg class="ic" style="left:1431px;top:894px;" width="24" height="26" viewBox="0 0 24 26"><path d="M2 3h20M2 9h9M2 15h7M2 21h5" stroke-width="1.800"/><circle cx="12.500" cy="20" r="2.600"/><circle cx="20" cy="18.500" r="2.600"/><path d="M15 20v-10l7.500-2v10.500M15 13.500l7.500-2" stroke-width="1.800"/></svg>
<svg class="ic" style="left:1489px;top:893px;" width="30" height="28" viewBox="0 0 30 28"><path d="M8 2v5M22 13v-3a4 4 0 0 0-4-4h-12a4 4 0 0 0-4 4v10a4 4 0 0 0 4 4h5"/><path d="M8 11v6M8 20v.5"/><path d="M13.500 20.500c3-5 11-5 14 0-3 5-11 5-14 0z" stroke-width="1.800"/><circle cx="20.500" cy="20.500" r="1.600" fill="#d6d9dc" stroke="none"/></svg>
<svg class="ic" style="left:1549px;top:894px;" width="28" height="26" viewBox="0 0 28 26"><rect x="2" y="2" width="24" height="22" rx="5"/><path d="M7 13h14M10.500 9.500l-3.500 3.500 3.500 3.500M17.500 9.500l3.500 3.500-3.500 3.500"/></svg>
<svg class="ic" style="left:1611px;top:894px;" width="26" height="26" viewBox="0 0 26 26"><circle cx="12.500" cy="12.500" r="10.500"/><path d="M7.500 12.500h10"/></svg>
<div class="a" style="left:1650px;top:904px;width:134px;height:4px;border-radius:2px;background:#2b3036"></div>
<div class="a" style="left:1650px;top:904px;width:62px;height:4px;border-radius:2px;background:#cfd2d6"></div>
<div class="a" style="left:1705px;top:898.500px;width:15px;height:15px;border-radius:8px;background:#70757c;border:2px solid #d0d3d7"></div>
<svg class="ic" style="left:29px;top:954px;stroke-linejoin:miter;stroke-linecap:butt" width="26" height="24" viewBox="0 0 26 24"><path d="M8 16.500h-5.500v-14h14v5"/><rect x="8" y="8" width="14.500" height="14"/><path d="M15.200 11.500v7M11.700 15h7" stroke-width="1.800"/></svg>
<svg class="ic teal" style="left:72px;top:956px;stroke-width:2.200" width="30" height="20" viewBox="0 0 30 20"><path d="M12 6.500v-1a3.500 3.500 0 0 0-3.500-3.500h-3a3.500 3.500 0 0 0-3.500 3.500v9a3.500 3.500 0 0 0 3.500 3.500h3a3.500 3.500 0 0 0 3.500-3.500v-1"/><rect x="14.500" y="2" width="13.500" height="16" rx="3.500"/><path d="M7 10h15M18.500 6.500l3.500 3.500-3.500 3.500"/></svg>
<svg class="ic" style="left:119px;top:956px;stroke-width:2.200" width="26" height="22" viewBox="0 0 26 22"><rect x="2" y="2" width="18" height="8" rx="4"/><rect x="2" y="12.500" width="22.500" height="8" rx="4"/><path d="M11.500 6v9" stroke-width="1.800"/></svg>
<svg class="ic teal" style="left:164px;top:952px;stroke-width:2.200" width="26" height="28" viewBox="0 0 26 28"><rect x="3" y="9.500" width="19" height="8.500" rx="4"/><path d="M12.500 7v13.500M12.500 1.500v3M5.500 3.500l2 2.500M19.500 3.500l-2 2.500M12.500 23v3M5.500 24.500l2-2.500M19.500 24.500l-2-2.500" stroke-width="1.800"/></svg>
<svg style="left:0;top:0;stroke:#bfc3c7;stroke-width:1;fill:none;shape-rendering:crispEdges" width="2560" height="1521" viewBox="0 0 2560 1521"><path d="M233.3 989V996 M263.4 989V996 M293.6 989V996 M323.7 989V996 M353.8 981V996 M383.9 989V996 M414.0 989V996 M444.2 989V996 M474.3 989V996 M504.4 981V996 M534.5 989V996 M564.6 989V996 M594.8 989V996 M624.9 989V996 M655.0 981V996 M685.1 989V996 M715.2 989V996 M745.4 989V996 M775.5 989V996 M805.6 981V996 M835.7 989V996 M865.8 989V996 M896.0 989V996 M926.1 989V996 M956.2 981V996 M986.3 989V996 M1016.4 989V996 M1046.6 989V996 M1076.7 989V996 M1106.8 981V996 M1136.9 989V996 M1167.0 989V996 M1197.2 989V996 M1227.3 989V996 M1257.4 981V996 M1287.5 989V996 M1317.6 989V996 M1347.8 989V996 M1377.9 989V996 M1408.0 981V996 M1438.1 989V996 M1468.2 989V996 M1498.4 989V996 M1528.5 989V996 M1558.6 981V996 M1588.7 989V996 M1618.8 989V996 M1649.0 989V996 M1679.1 989V996 M1709.2 981V996 M1739.3 989V996 M1769.4 989V996 M1799.6 989V996 M1829.7 989V996 M1859.8 981V996 M1889.9 989V996 M1920.0 989V996"/></svg>
<div class="t c" style="left:283.8px;width:140px;top:958px;color:#c3c7cb;font-size:18.400px">00:00:05:00</div>
<div class="t c" style="left:434.4px;width:140px;top:958px;color:#c3c7cb;font-size:18.400px">00:00:10:00</div>
<div class="t c" style="left:585.0px;width:140px;top:958px;color:#c3c7cb;font-size:18.400px">00:00:15:00</div>
<div class="t c" style="left:735.6px;width:140px;top:958px;color:#c3c7cb;font-size:18.400px">00:00:20:00</div>
<div class="t c" style="left:886.2px;width:140px;top:958px;color:#c3c7cb;font-size:18.400px">00:00:25:00</div>
<div class="t c" style="left:1036.8px;width:140px;top:958px;color:#c3c7cb;font-size:18.400px">00:00:30:00</div>
<div class="t c" style="left:1187.4px;width:140px;top:958px;color:#c3c7cb;font-size:18.400px">00:00:35:00</div>
<div class="t c" style="left:1338.0px;width:140px;top:958px;color:#c3c7cb;font-size:18.400px">00:00:40:00</div>
<div class="t c" style="left:1488.6px;width:140px;top:958px;color:#c3c7cb;font-size:18.400px">00:00:45:00</div>
<div class="t c" style="left:1639.2px;width:140px;top:958px;color:#c3c7cb;font-size:18.400px">00:00:50:00</div>
<div class="a" style="left:12px;top:1043px;width:1998px;height:105px;background:#1f2428"></div>
<div class="a" style="left:12px;top:1148px;width:1998px;height:102px;background:#22282e"></div>
<div class="a" style="left:12px;top:1250px;width:1998px;height:73px;background:#1f2428"></div>
<div class="a" style="left:12px;top:1323px;width:1998px;height:103px;background:#22282e"></div>
<div class="a" style="left:12px;top:1426px;width:1998px;height:100px;background:#181b1e"></div>
<svg class="ic" style="left:25px;top:1177px;" width="22" height="20" viewBox="0 0 22 20"><rect x=".5" y=".5" width="21" height="19" rx="5" fill="#c8ccd1" stroke="none"/><path d="M1 6.500h20M6.500 1v5M11 1v5M15.500 1v5" stroke="#22282e" stroke-width="1.600"/><path d="M8.500 9.500l6 3.300-6 3.300z" fill="#22282e" stroke="none"/></svg>
<div class="t" style="left:50px;top:1174px;font-size:15px;color:#c8ccd1">1</div>
<svg class="ic" style="left:78px;top:1177px;stroke-width:1.800" width="18" height="18" viewBox="0 0 18 18"><rect x="2" y="7.500" width="14" height="8.500" rx="1"/><path d="M4.500 7.500v-2.500a3 3 0 0 1 6 0"/><circle cx="9" cy="11.700" r=".8" fill="#d6d9dc"/></svg>
<svg class="ic" style="left:125px;top:1176px;stroke-width:1.800" width="22" height="20" viewBox="0 0 22 20"><path d="M2 7v6h3.500l5.500 4.500v-15l-5.500 4.500z"/><path d="M14 7a4.500 4.500 0 0 1 0 6M16.500 4.500a8 8 0 0 1 0 11"/></svg>
<svg class="ic" style="left:170px;top:1178px;stroke-width:1.800" width="20" height="16" viewBox="0 0 20 16"><path d="M1.500 8c4-7.500 13-7.500 17 0-4 7.500-13 7.500-17 0z"/><circle cx="10" cy="8" r="3" fill="#d6d9dc" stroke="none"/></svg>
<svg class="ic" style="left:24px;top:1263px;" width="24" height="22" viewBox="0 0 24 22"><circle cx="5.500" cy="16.500" r="4.300" fill="#c8ccd1" stroke="none"/><circle cx="17" cy="13.500" r="4.300" fill="#c8ccd1" stroke="none"/><path d="M8.300 16.500v-11l11.500-3.500v11.500" stroke="#c8ccd1" stroke-width="3"/><path d="M8.300 8l11.500-3.500" stroke="#c8ccd1" stroke-width="4"/></svg>
<div class="t" style="left:50px;top:1260px;font-size:15px;color:#c8ccd1">1</div>
<svg class="ic" style="left:78px;top:1263px;stroke-width:1.800" width="18" height="18" viewBox="0 0 18 18"><rect x="2" y="7.500" width="14" height="8.500" rx="1"/><path d="M4.500 7.500v-2.500a3 3 0 0 1 6 0"/><circle cx="9" cy="11.700" r=".8" fill="#d6d9dc"/></svg>
<svg class="ic" style="left:125px;top:1262px;stroke-width:1.800" width="22" height="20" viewBox="0 0 22 20"><path d="M2 7v6h3.500l5.500 4.500v-15l-5.500 4.500z"/><path d="M14 7a4.500 4.500 0 0 1 0 6M16.500 4.500a8 8 0 0 1 0 11"/></svg>
<div class="t" style="left:30px;top:1205px;font-size:15px;color:#9ca1a7">视频 1</div>
<div class="t" style="left:30px;top:1292px;font-size:15px;color:#9ca1a7">音频 1</div>
<svg style="left:0;top:0" width="2560" height="1521" viewBox="0 0 2560 1521">
<defs>
<linearGradient id="tg" x1="0" y1="0" x2="0" y2="1"><stop offset="0" stop-color="#d9776c"/><stop offset=".3" stop-color="#ea8670"/><stop offset=".55" stop-color="#f3b294"/><stop offset=".75" stop-color="#f2a47a"/><stop offset="1" stop-color="#f3a064"/></linearGradient>
<radialGradient id="tsun"><stop offset="0" stop-color="#fffbe0"/><stop offset=".25" stop-color="#fff0b8" stop-opacity=".9"/><stop offset=".6" stop-color="#fbd8b0" stop-opacity=".45"/><stop offset="1" stop-color="#f8c8a0" stop-opacity="0"/></radialGradient>
<linearGradient id="tpur" x1="0" y1="0" x2="1" y2="1"><stop offset="0" stop-color="#9a6a98" stop-opacity=".75"/><stop offset=".5" stop-color="#b06c88" stop-opacity="0"/></linearGradient>
<filter id="tturb" x="0" y="0" width="100%" height="100%" color-interpolation-filters="sRGB"><feTurbulence type="fractalNoise" baseFrequency="0.035 0.07" numOctaves="3" seed="5" result="n"/><feColorMatrix in="n" type="matrix" values="0 0 0 0 0.60  0 0 0 0 0.45  0 0 0 0 0.60  2.800 0 0 0 -1.200"/></filter>
<filter id="tturb2" x="0" y="0" width="100%" height="100%" color-interpolation-filters="sRGB"><feTurbulence type="fractalNoise" baseFrequency="0.04 0.09" numOctaves="3" seed="11" result="n"/><feColorMatrix in="n" type="matrix" values="0 0 0 0 1  0 0 0 0 0.80  0 0 0 0 0.70  0 2.600 0 0 -1.100"/></filter>
<filter id="tb1"><feGaussianBlur stdDeviation="1.200"/></filter>
<pattern id="tpat" x="203.200" y="1156" width="108.100" height="58" patternUnits="userSpaceOnUse">
<rect width="108.100" height="58" fill="url(#tg)"/>
<rect width="60" height="26" fill="url(#tpur)"/>
<rect width="108.100" height="40" filter="url(#tturb)" opacity=".5"/>
<rect width="108.100" height="46" filter="url(#tturb2)" opacity=".5"/>
<g filter="url(#tb1)">
<path d="M0 42c14-5 28-2 42-4s22-8 36-5 20 2 30 0v10H0z" fill="#f9d2b8" opacity=".6"/>
<path d="M60 38c8-6 18-8 28-4l20 4v20H70z" fill="#e08a70" opacity=".5"/>
<ellipse cx="50" cy="37" rx="30" ry="13" fill="url(#tsun)"/>
<ellipse cx="50" cy="37" rx="5" ry="4" fill="#fffbe6"/>
<path d="M30 58c2-4 6-5 9-3l5-2 6 5z" fill="#8a5030" opacity=".55"/>
</g>
<rect x="0" y="0" width=".8" height="58" fill="#7a5a58" opacity=".5"/>
</pattern>
<linearGradient id="gfade" x1="0" y1="0" x2="1" y2="0"><stop offset="0" stop-color="#2c7365"/><stop offset="1" stop-color="#3f9a86"/></linearGradient>
<clipPath id="cclip"><rect x="209" y="1156" width="1194" height="90.800" rx="5.500"/></clipPath>
</defs>
<rect x="205" y="1152" width="1202" height="98.800" rx="9" fill="#f4f6f7"/>
<rect x="208" y="1155" width="1196" height="92.800" rx="6.500" fill="#15181a"/>
<g clip-path="url(#cclip)">
<rect x="209" y="1156" width="1195" height="58" fill="url(#tpat)"/>
<rect x="209" y="1213.600" width="1195" height="34" fill="#3f9a86"/>
<rect x="209" y="1213.600" width="60" height="34" fill="url(#gfade)"/>
</g>
<rect x="217" y="1165" width="21.500" height="21.500" rx="4" fill="#d8dde2" fill-opacity=".88"/>
<path d="M224 1169.500l9.500 6.300-9.500 6.300z" fill="#a56c62"/>
<text x="247" y="1182.500" font-size="18" fill="#ffffff" style="font-family:'Liberation Sans','Noto Sans CJK SC',sans-serif;paint-order:stroke;stroke:#b0605055;stroke-width:1.500px">云层上的日落</text>
<text x="367" y="1181" font-size="12.500" font-weight="bold" font-style="italic" fill="#f6b21e" style="font-family:'Liberation Sans',sans-serif;paint-order:stroke;stroke:#c8560a;stroke-width:1.800px">VIP</text>
</svg>
<div class="a" style="left:205px;top:1509px;width:1080px;height:14px;border-radius:7px 7px 0 0;background:#434b54"></div>
<div class="a" style="left:206px;top:1510px;width:15px;height:15px;border-radius:8px;background:#5b646d;border:1.500px solid #8c949c"></div>
<div class="a" style="left:1267px;top:1510px;width:15px;height:15px;border-radius:8px;background:#5b646d;border:1.500px solid #8c949c"></div>
<div class="a" style="left:204px;top:936px;width:2.500px;height:600px;background:#f76b6b"></div>
<div class="a" style="left:204px;top:934px;width:9px;height:19px;border-radius:0 9px 9px 0;background:#f76b6b"></div>
<div class="a" style="left:204px;top:1035px;width:17px;height:54px;border-radius:0 17px 17px 0;background:#f76b6b"></div>
<svg class="ic" style="left:202px;top:1052px;" width="18" height="26" viewBox="0 0 18 26"><path d="M10 3l-6.500 12a5 5 0 1 0 5-3.500" stroke="#ffe9e6" stroke-width="1.300"/></svg>
</div></div>

<!-- ================= RIGHT PANEL ================= -->
<div id="right" class="a"><div class="a pg" style="left:-2022px;top:-60px;width:2560px;height:1521px">
  <div class="a" style="left:2022px;top:60px;width:527px;height:60px;background:linear-gradient(#161b1f,#0a1016)"></div>
<div class="a" style="left:2145px;top:66px;width:90px;height:60px;border-radius:8px 8px 0 0;background:#21272d"></div>
<svg style="left:2138px;top:113px" width="104" height="7" viewBox="0 0 104 7"><path d="M0 7h7v-7a7 7 0 0 1-7 7zM104 7h-7v-7a7 7 0 0 0 7 7z" fill="#21272d"/></svg>
<div class="t c" style="left:2022px;width:120px;top:83px;color:#f0f1f2;font-size:18.500px">视频</div>
<div class="t c" style="left:2130px;width:120px;top:83px;color:#55e0c0;font-size:18.500px">颜色</div>
<div class="t c" style="left:2238px;width:120px;top:83px;color:#f0f1f2;font-size:18.500px">变速</div>
<div class="a" style="left:2046px;top:132px;width:81px;height:36px;border-radius:18px;background:#343a40"></div>
<div class="t c" style="left:2046px;width:81px;top:139px;color:#55e0c0">基础</div>
<div class="t c" style="left:2139px;width:81px;top:139px;color:#f0f1f2">HSL</div>
<div class="t c" style="left:2232px;width:81px;top:139px;color:#f0f1f2">曲线</div>
<div class="t c" style="left:2325px;width:81px;top:139px;color:#f0f1f2">色轮</div>
<svg class="ic" style="left:2475px;top:146px;stroke:#c9cdd1" width="14" height="10" viewBox="0 0 14 10"><path d="M2 2.500l5 5 5-5"/></svg>
<svg class="ic" style="left:2507px;top:142px;" width="24" height="16" viewBox="0 0 24 16"><rect x="1.500" y="1.500" width="8" height="13" rx="2" stroke-width="1.800"/><rect x="12.500" y=".5" width="10" height="15" rx="2.500" fill="#d6d9dc" stroke="none"/></svg>
<div class="a" style="left:2022px;top:180px;width:527px;height:60px;background:#2d333a"></div>
<div class="t b" style="left:2046px;top:199px;color:#ffffff">预设</div>
<div class="a" style="left:2543px;top:181px;width:5px;height:420px;border-radius:3px;background:#444a52"></div>
<div class="a" style="left:2046px;top:264px;width:478px;height:36px;border-radius:9px;background:#171b1f"></div>
<div class="t" style="left:2058px;top:271px;color:#dfe1e4">默认</div>
<svg class="ic" style="left:2500px;top:277px;stroke:#dfe1e4" width="14" height="10" viewBox="0 0 14 10"><path d="M2 2.500l5 5 5-5"/></svg>
<div class="a" style="left:2519px;top:312px;width:5px;height:126px;border-radius:3px;background:#444a52"></div>
<svg style="left:0;top:0" width="0" height="0"><defs>
<filter id="cb" x="-10%" y="-10%" width="120%" height="120%"><feGaussianBlur stdDeviation=".7"/></filter><symbol id="clap" viewBox="0 0 82 82">
<path d="M56 14c3-5 9-7 14-5l12 7v18l-8-3-7-7-12-4z" fill="#33262a" opacity=".85"/>
<path d="M10 24l46-9 2 7-46 10z" fill="#20262a" opacity=".9"/>
<path d="M20 23l5-1-2 6-5 1zM31 20.500l5-1-2 6-5 1zM42 18.500l5-1-2 6-5 1z" fill="#e8a030" opacity=".8"/>
<path d="M25.500 22l5-1-2 6-5 1zM36.500 19.500l5-1-2 6-5 1z" fill="#c03060" opacity=".8"/>
<rect x="10" y="31" width="54" height="7" fill="#2a3034" opacity=".85"/>
<path d="M16 31l5 0-3 7-5 0zM30 31l5 0-3 7-5 0zM44 31l5 0-3 7-5 0z" fill="#3aa0d0" opacity=".7"/>
<path d="M23 31l5 0-3 7-5 0zM37 31l5 0-3 7-5 0z" fill="#e0a040" opacity=".7"/>
<rect x="10" y="38" width="54" height="26" fill="#ffffff" opacity=".42"/>
<rect x="16" y="39.500" width="42" height="6" fill="#3a1418" opacity=".85"/>
<path d="M12 50h50M12 56h50" stroke="#ffffff" stroke-opacity=".5" stroke-width=".8"/>
<path d="M13 53h18M15 59h24M15 62.500h18" stroke="#40464c" stroke-opacity=".55" stroke-width="1.200"/>
<path d="M48 60l10 3 4 5-8 2z" fill="#f4d0c0" opacity=".8"/>
<path d="M60 66l7-3 15 9v10h-13l-6-8z" fill="#2a2422" opacity=".9"/>
</symbol></defs></svg>
<div class="a" style="left:2046px;top:312px;width:82px;height:82px;border-radius:10px;background:#2c333a"></div>
<svg class="ic" style="left:2065px;top:331px;stroke:#cfd3d7" width="44" height="44" viewBox="0 0 44 44"><circle cx="22" cy="22" r="20.300" stroke-width="1.600"/><path d="M13.500 13.500l17.500 17.500" stroke-width="1.600"/></svg>
<div class="t c" style="left:2027px;width:120px;top:399px;color:#dfe1e4">无</div>
<svg style="left:2151px;top:312px;border-radius:10px;overflow:hidden;filter:grayscale(1);" width="82" height="82" viewBox="0 0 82 82"><defs><linearGradient id="sk1" x1="0" y1="0" x2="0" y2="1"><stop offset="0" stop-color="#b2b2b2"/><stop offset="1" stop-color="#cfcfcf"/></linearGradient></defs><rect width="82" height="40" fill="url(#sk1)"/><rect y="39" width="82" height="43" fill="#bcbcbc"/><g filter="url(#cb)"><use href="#clap" width="82" height="82"/></g><rect width="82" height="82" fill="#b2b2b2" opacity=".22"/></svg>
<div class="t c" style="left:2132px;width:120px;top:399px;color:#dfe1e4">黑白</div>
<svg style="left:2256px;top:312px;border-radius:10px;overflow:hidden;" width="82" height="82" viewBox="0 0 82 82"><defs><linearGradient id="sk2" x1="0" y1="0" x2="0" y2="1"><stop offset="0" stop-color="#2d8fe2"/><stop offset="1" stop-color="#94c8ee"/></linearGradient></defs><rect width="82" height="40" fill="url(#sk2)"/><rect y="39" width="82" height="43" fill="#a9b5cb"/><g filter="url(#cb)"><use href="#clap" width="82" height="82"/></g><rect width="82" height="82" fill="#2d8fe2" opacity=".22"/></svg>
<div class="t c" style="left:2237px;width:120px;top:399px;color:#dfe1e4">大片</div>
<svg style="left:2361px;top:312px;border-radius:10px;overflow:hidden;" width="82" height="82" viewBox="0 0 82 82"><defs><linearGradient id="sk3" x1="0" y1="0" x2="0" y2="1"><stop offset="0" stop-color="#6ab2d8"/><stop offset="1" stop-color="#a8d2e2"/></linearGradient></defs><rect width="82" height="40" fill="url(#sk3)"/><rect y="39" width="82" height="43" fill="#dfa796"/><g filter="url(#cb)"><use href="#clap" width="82" height="82"/></g><rect width="82" height="82" fill="#6ab2d8" opacity=".22"/></svg>
<div class="t c" style="left:2342px;width:120px;top:399px;color:#dfe1e4">色彩增强</div>
<svg style="left:2046px;top:426px;border-radius:10px;overflow:hidden;" width="82" height="82" viewBox="0 0 82 82"><defs><linearGradient id="sk4" x1="0" y1="0" x2="0" y2="1"><stop offset="0" stop-color="#55b6e2"/><stop offset="1" stop-color="#b2dcec"/></linearGradient></defs><rect width="82" height="40" fill="url(#sk4)"/><rect y="39" width="82" height="43" fill="#e9b9a8"/><g filter="url(#cb)"><use href="#clap" width="82" height="82"/></g><rect width="82" height="82" fill="#55b6e2" opacity=".22"/></svg>
<div class="t c" style="left:2027px;width:120px;top:513px;color:#dfe1e4">变亮</div>
<svg style="left:2151px;top:426px;border-radius:10px;overflow:hidden;" width="82" height="82" viewBox="0 0 82 82"><defs><linearGradient id="sk5" x1="0" y1="0" x2="0" y2="1"><stop offset="0" stop-color="#5574e0"/><stop offset="1" stop-color="#8594dc"/></linearGradient></defs><rect width="82" height="40" fill="url(#sk5)"/><rect y="39" width="82" height="43" fill="#8e97c9"/><g filter="url(#cb)"><use href="#clap" width="82" height="82"/></g><rect width="82" height="82" fill="#5574e0" opacity=".22"/></svg>
<div class="t c" style="left:2132px;width:120px;top:513px;color:#dfe1e4">冷色系</div>
<svg style="left:2256px;top:426px;border-radius:10px;overflow:hidden;" width="82" height="82" viewBox="0 0 82 82"><defs><linearGradient id="sk6" x1="0" y1="0" x2="0" y2="1"><stop offset="0" stop-color="#3580f2"/><stop offset="1" stop-color="#5b94ea"/></linearGradient></defs><rect width="82" height="40" fill="url(#sk6)"/><rect y="39" width="82" height="43" fill="#6f99da"/><g filter="url(#cb)"><use href="#clap" width="82" height="82"/></g><rect width="82" height="82" fill="#3580f2" opacity=".22"/></svg>
<div class="t c" style="left:2237px;width:120px;top:513px;color:#dfe1e4">极冷</div>
<svg style="left:2361px;top:426px;border-radius:10px;overflow:hidden;" width="82" height="82" viewBox="0 0 82 82"><defs><linearGradient id="sk7" x1="0" y1="0" x2="0" y2="1"><stop offset="0" stop-color="#88afc0"/><stop offset="1" stop-color="#aac2ca"/></linearGradient></defs><rect width="82" height="40" fill="url(#sk7)"/><rect y="39" width="82" height="43" fill="#c9a090"/><g filter="url(#cb)"><use href="#clap" width="82" height="82"/></g><rect width="82" height="82" fill="#88afc0" opacity=".22"/></svg>
<div class="t c" style="left:2342px;width:120px;top:513px;color:#dfe1e4">变暗</div>
<svg style="left:2046px;top:540px;border-radius:10px;overflow:hidden;" width="82" height="82" viewBox="0 0 82 82"><defs><linearGradient id="sk8" x1="0" y1="0" x2="0" y2="1"><stop offset="0" stop-color="#62c09c"/><stop offset="1" stop-color="#94cab2"/></linearGradient></defs><rect width="82" height="40" fill="url(#sk8)"/><rect y="39" width="82" height="43" fill="#a9b8a0"/><g filter="url(#cb)"><use href="#clap" width="82" height="82"/></g><rect width="82" height="82" fill="#62c09c" opacity=".22"/></svg>
<div class="t c" style="left:2027px;width:120px;top:627px;color:#dfe1e4">优雅</div>
<svg style="left:2151px;top:540px;border-radius:10px;overflow:hidden;" width="82" height="82" viewBox="0 0 82 82"><defs><linearGradient id="sk9" x1="0" y1="0" x2="0" y2="1"><stop offset="0" stop-color="#e89676"/><stop offset="1" stop-color="#f2b493"/></linearGradient></defs><rect width="82" height="40" fill="url(#sk9)"/><rect y="39" width="82" height="43" fill="#ee8e6c"/><g filter="url(#cb)"><use href="#clap" width="82" height="82"/></g><rect width="82" height="82" fill="#e89676" opacity=".22"/></svg>
<div class="t c" style="left:2132px;width:120px;top:627px;color:#dfe1e4">史诗</div>
<svg style="left:2256px;top:540px;border-radius:10px;overflow:hidden;" width="82" height="82" viewBox="0 0 82 82"><defs><linearGradient id="sk10" x1="0" y1="0" x2="0" y2="1"><stop offset="0" stop-color="#36a0f2"/><stop offset="1" stop-color="#84c2f2"/></linearGradient></defs><rect width="82" height="40" fill="url(#sk10)"/><rect y="39" width="82" height="43" fill="#a1a8e0"/><g filter="url(#cb)"><use href="#clap" width="82" height="82"/></g><rect width="82" height="82" fill="#36a0f2" opacity=".22"/></svg>
<div class="t c" style="left:2237px;width:120px;top:627px;color:#dfe1e4">奇幻</div>
<svg style="left:2361px;top:540px;border-radius:10px;overflow:hidden;" width="82" height="82" viewBox="0 0 82 82"><defs><linearGradient id="sk11" x1="0" y1="0" x2="0" y2="1"><stop offset="0" stop-color="#98b8c2"/><stop offset="1" stop-color="#b2c2c4"/></linearGradient></defs><rect width="82" height="40" fill="url(#sk11)"/><rect y="39" width="82" height="43" fill="#d0a797"/><g filter="url(#cb)"><use href="#clap" width="82" height="82"/></g><rect width="82" height="82" fill="#98b8c2" opacity=".22"/></svg>
<div class="t c" style="left:2342px;width:120px;top:627px;color:#dfe1e4">东方</div>
<div class="a" style="left:2046px;top:663px;width:478px;height:23px;border-radius:7px;background:#2a3037"></div>
<svg style="left:2279px;top:671px" width="10" height="8" viewBox="0 0 10 8"><path d="M5 .5L9.500 7h-9z" fill="#dfe1e4"/></svg>
<div class="a" style="left:2022px;top:711px;width:527px;height:60px;background:#2d333a"></div>
<div class="a" style="left:2046px;top:730.500px;width:36px;height:21px;border-radius:11px;border:2px solid #55e0c0"></div>
<div class="a" style="left:2064.500px;top:735px;width:12px;height:12px;border-radius:6px;background:#55e0c0"></div>
<div class="t b" style="left:2094px;top:729px;color:#ffffff;font-size:19px">LUT</div>
<svg class="ic" style="left:2480px;top:729px;stroke:#cfd3d7" width="24" height="24" viewBox="0 0 24 24"><path d="M12 3.300l8.700 8.700-8.700 8.700-8.700-8.700z" stroke-width="1.700"/></svg>
<div class="t" style="left:2046px;top:802px;color:#e6e8ea;font-size:19px">Lut预设</div>
<svg class="ic" style="left:2481px;top:802px;stroke:#4a5057" width="22" height="24" viewBox="0 0 22 24"><path d="M2 5.500h18M7.500 5v-3h7v3M4 5.500v14a2 2 0 0 0 2 2h10a2 2 0 0 0 2-2v-14M8.500 10v7.500M13.500 10v7.500" stroke-width="1.800"/></svg>
<div class="a" style="left:2046px;top:837px;width:346px;height:36px;border-radius:9px;background:#171b1f"></div>
<div class="t" style="left:2058px;top:844px;color:#dfe1e4">无</div>
<svg class="ic" style="left:2368px;top:850px;stroke:#dfe1e4" width="14" height="10" viewBox="0 0 14 10"><path d="M2 2.500l5 5 5-5"/></svg>
<div class="a" style="left:2417px;top:837px;width:107px;height:36px;border-radius:9px;background:#343a41"></div>
<div class="t b c" style="left:2417px;width:107px;top:844.500px;color:#e6e8ea">添加</div>
<svg class="ic" style="left:2480px;top:904px;stroke:#cfd3d7" width="24" height="24" viewBox="0 0 24 24"><path d="M12 3.300l8.700 8.700-8.700 8.700-8.700-8.700z" stroke-width="1.700"/></svg>
<div class="a" style="left:2046px;top:955px;width:335px;height:5px;border-radius:3px;background:#c9cdd2"></div>
<div class="a" style="left:2372px;top:949px;width:17px;height:17px;border-radius:9px;background:#5c6269;border:3px solid #dde0e3"></div>
<div class="a" style="left:2417px;top:940px;width:107px;height:35px;border-radius:9px;background:#1b2025"></div>
<div class="t" style="left:2432px;top:946px;color:#e6e8ea">100.00</div>
<div class="t" style="left:2503px;top:946px;color:#c9cdd1">%</div>
<svg class="ic" style="left:2480px;top:1004px;stroke:#cfd3d7" width="24" height="24" viewBox="0 0 24 24"><path d="M12 3.300l8.700 8.700-8.700 8.700-8.700-8.700z" stroke-width="1.700"/></svg>
<div class="a" style="left:2046px;top:1055px;width:346px;height:5px;border-radius:3px;background:#2e343b"></div>
<div class="a" style="left:2417px;top:1041px;width:107px;height:35px;border-radius:9px;background:#1b2025"></div>
<div class="t" style="left:2432px;top:1047px;color:#e6e8ea">0.00</div>
<div class="a" style="left:2022px;top:1098px;width:527px;height:59px;background:#2d333a"></div>
<div class="a" style="left:2046px;top:1117.500px;width:36px;height:21px;border-radius:11px;border:2px solid #6a7077"></div>
<div class="t b" style="left:2109px;top:1116px;color:#ffffff;font-size:19px">AI仿色</div>
<div class="a" style="left:2178px;top:1119px;width:36px;height:18px;border-radius:5px;background:linear-gradient(90deg,#ff8a6a,#f85fc6 55%,#e94df2)"></div>
<div class="t b c" style="left:2178px;width:36px;top:1116px;font-size:12.500px;font-style:italic;color:#fff;font-family:'Liberation Sans',sans-serif;letter-spacing:.3px">NEW</div>
<div class="t" style="left:2046px;top:1182px;color:#555b62">添加仿色</div>
<svg class="ic" style="left:2135px;top:1185px;stroke:#4a5057" width="20" height="20" viewBox="0 0 20 20"><circle cx="10" cy="10" r="8.500" stroke-width="1.600"/><path d="M7.500 8a2.500 2.500 0 1 1 3.500 2.300c-.7.400-1 .9-1 1.700M10 14.300v.3" stroke-width="1.600"/></svg>
<div class="a" style="left:2046px;top:1230px;width:120px;height:120px;border-radius:9px;background:#272d34"></div>
<svg class="ic" style="left:2094px;top:1278px;stroke:#4d535a;stroke-linecap:butt" width="24" height="24" viewBox="0 0 24 24"><path d="M12 1v22M1 12h22" stroke-width="2.200"/></svg>
<svg style="left:2184px;top:1230px;border-radius:9px;overflow:hidden" width="120" height="120" viewBox="0 0 120 120"><defs><filter id="fb3"><feGaussianBlur stdDeviation="3"/></filter></defs><rect width="120" height="120" fill="#1e2329"/><rect y="14" width="120" height="60" fill="#42474e"/><g filter="url(#fb3)"><ellipse cx="38" cy="52" rx="22" ry="28" fill="#343b45"/><ellipse cx="78" cy="48" rx="18" ry="24" fill="#4e4f55"/><ellipse cx="100" cy="30" rx="20" ry="14" fill="#4a4f56"/><ellipse cx="12" cy="30" rx="14" ry="14" fill="#484d54"/></g><rect y="74" width="120" height="15" fill="#1e2329"/><rect y="89" width="30" height="31" fill="#484d53"/><rect x="30" y="89" width="30" height="31" fill="#42474d"/><rect x="60" y="89" width="30" height="31" fill="#3a3f45"/><rect x="90" y="89" width="30" height="31" fill="#33383f"/><g fill="none" stroke="#6c7178" stroke-width="1.400" stroke-linecap="round" stroke-linejoin="round"><path d="M88 31.500a5 5 0 0 1-1-9.800 6.500 6.500 0 0 1 12.500-1 5.500 5.500 0 0 1-.5 10.800"/><path d="M93 33v-8m-2.500 2.500l2.500-2.500 2.500 2.500"/></g></svg>
<div class="t c" style="left:2046px;width:120px;top:1356px;color:#4d535a">添加</div>
<div class="t c" style="left:2184px;width:120px;top:1356px;color:#4d535a">我的仿色1</div>
<div class="t" style="left:2046px;top:1411px;color:#454b52">强度</div>
<div class="a" style="left:2022px;top:1400px;width:527px;height:43px;background:linear-gradient(rgba(32,38,44,0),rgba(26,30,35,.85))"></div>
<div class="a" style="left:2022px;top:1443px;width:527px;height:90px;background:#20262d"></div>
<div class="a" style="left:2046px;top:1467px;width:58px;height:36px;border-radius:9px;background:#353b42"></div>
<div class="t b c" style="left:2046px;width:58px;top:1473px;color:#f0f1f2">重置</div>
<div class="a" style="left:2412px;top:1467px;width:112px;height:36px;border-radius:10px;background:#55e0c0"></div>
<div class="t b c" style="left:2412px;width:112px;top:1473px;color:#17302c">保存为预设</div>
</div></div>

<!-- ================= OVERLAYS ================= -->
<div id="overlay" class="a" style="left:0;top:0;width:2560px;height:1521px">
<svg style="left:0;top:0" width="2560" height="1521" viewBox="0 0 2560 1521"><path d="M1305.400 1018.100L1761.800 867.200L1758.200 856.200L1302.600 1009.900z" fill="#50e6c2"/><circle cx="1304" cy="1014" r="4.300" fill="#50e6c2"/><path d="M1783.500 853L1751.500 850L1760 874.500z" fill="#50e6c2" stroke="#50e6c2" stroke-width="2" stroke-linejoin="round"/></svg>
<div class="a" style="left:1807px;top:854px;width:355px;height:288px;border-radius:9px;background:#15181b;border:1px solid #2a2e33;box-shadow:0 2px 6px rgba(0,0,0,.3)"></div>
<div class="t" style="left:1843px;top:872px;color:#d9dcdf">项目参数设置</div>
<svg class="ic" style="left:1815px;top:933px;stroke:#d9dcdf;stroke-width:1.800" width="22" height="20" viewBox="0 0 22 20"><path d="M3.500 11.500l4.500 5L18.500 3.500"/></svg>
<div class="t" style="left:1843px;top:932px;color:#d9dcdf">暂停播放使用源质量</div>
<div class="a" style="left:1808px;top:974px;width:353px;height:1px;background:#2d3136"></div>
<div class="t" style="left:1843px;top:994px;color:#d9dcdf">缩放级别</div>
<svg style="left:2139px;top:1000px" width="8" height="10" viewBox="0 0 8 10"><path d="M1 .5v9L7 5z" fill="#b0b4b9"/></svg>
<div class="t" style="left:1843px;top:1030px;color:#d9dcdf">展示安全区</div>
<div class="t" style="left:1843px;top:1066px;color:#d9dcdf">标尺</div>
<div class="t" style="left:2082px;top:1066px;color:#d9dcdf;font-size:19.300px">Ctrl+P</div>
<div class="t" style="left:1843px;top:1102px;color:#4b5056">显示参考线</div>
<div class="t" style="left:2082px;top:1102px;color:#4b5056;font-size:19.300px">Ctrl+;</div>
<div class="a" style="left:1792px;top:804px;width:61px;height:56px;border:7px solid #50e6c2;border-radius:5px 5px 0 0"></div>
<div class="a" style="left:1799px;top:853px;width:368px;height:64px;border:7px solid #50e6c2;border-radius:3px"></div>
</div>

</body>
</html>
